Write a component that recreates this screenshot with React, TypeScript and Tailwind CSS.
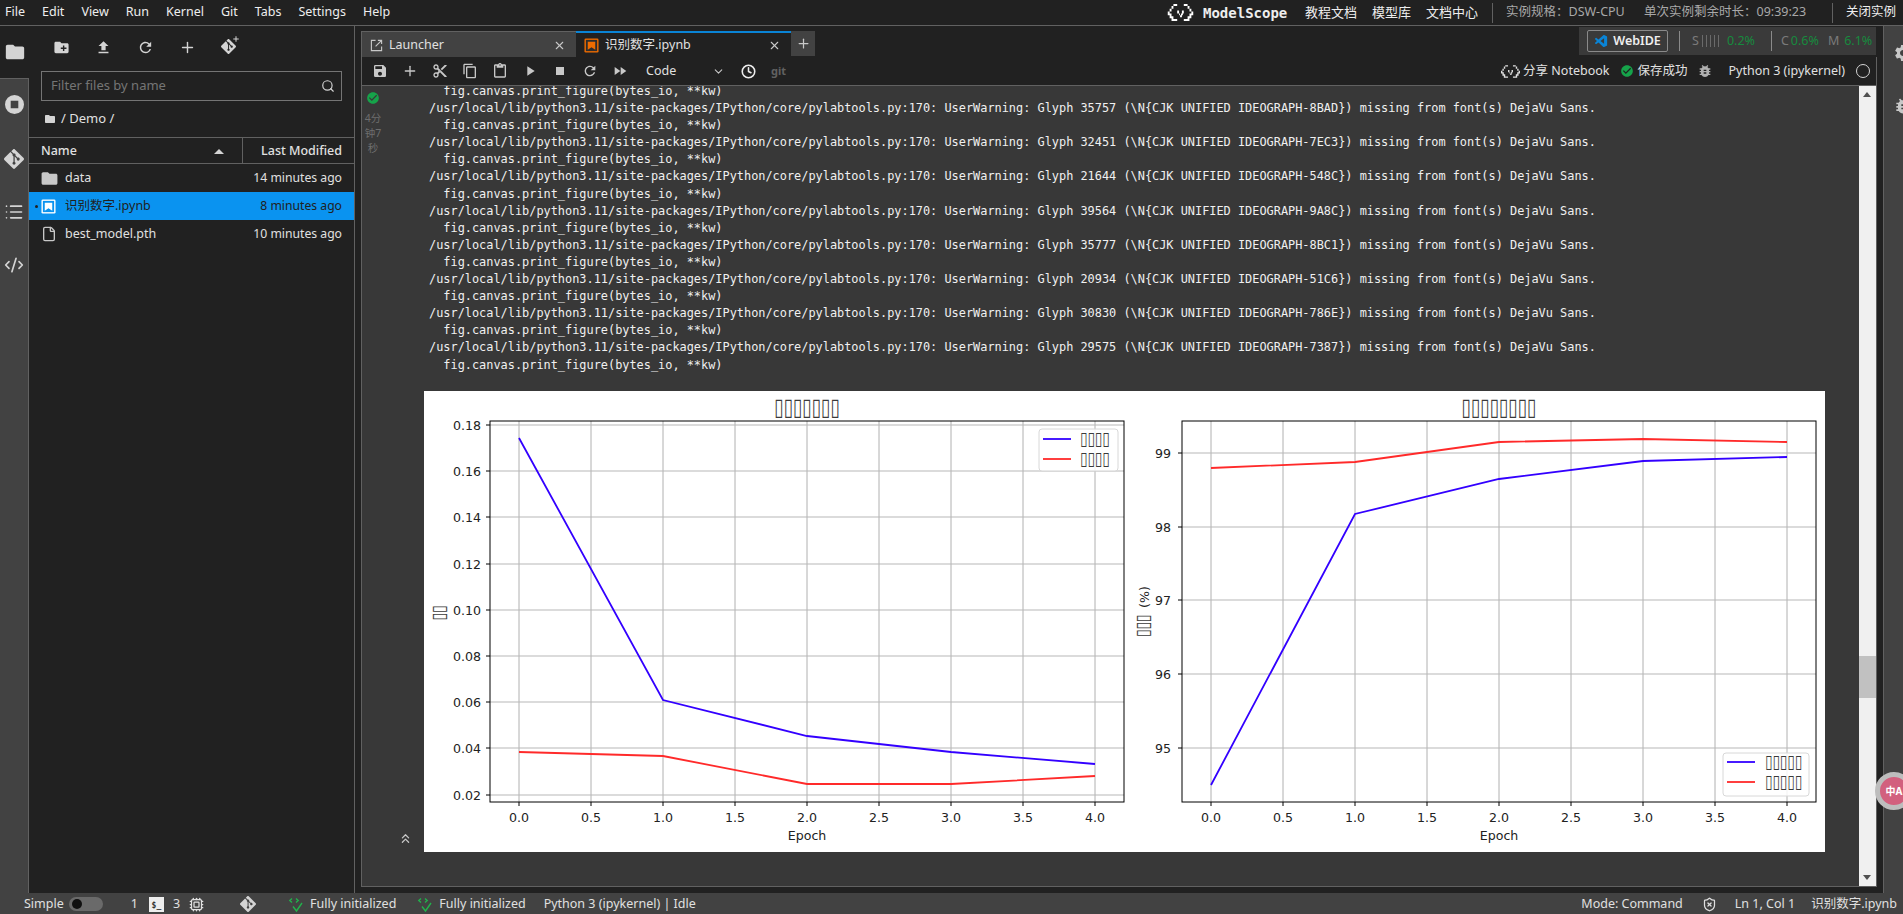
import React from 'react';
import { ChevronDown, ChevronsUp, Clock, CodeXml, Cpu, File, List, Plus, Search, ShieldX, X } from 'lucide-react';
import {
  MdBugReport,
  MdContentCut,
  MdCreateNewFolder,
  MdFastForward,
  MdFileUpload,
  MdFolder,
  MdOutlineContentCopy,
  MdOutlineContentPaste,
  MdPlayArrow,
  MdRefresh,
  MdSave,
  MdSettings,
  MdStop,
  MdCheckCircle,
} from 'react-icons/md';
import { SiGit } from 'react-icons/si';
import { VscVscode } from 'react-icons/vsc';

const MENU = ['File', 'Edit', 'View', 'Run', 'Kernel', 'Git', 'Tabs', 'Settings', 'Help'];

const GLYPHS = [
  ['35757', '8BAD'],
  ['32451', '7EC3'],
  ['21644', '548C'],
  ['39564', '9A8C'],
  ['35777', '8BC1'],
  ['20934', '51C6'],
  ['30830', '786E'],
  ['29575', '7387'],
];

const ModelScopeLogo = ({ className }: { className?: string }) => (
  <svg viewBox="0 0 27 18" className={className} fill="currentColor">
    <path d="M6 0h4v2H6v3H4v3H2v2h2v3h2v3h4v2H4v-3H2v-3H0V8h2V5h2V2h2z" />
    <path d="M21 0h-4v2h4v3h2v3h2v2h-2v3h-2v3h-4v2h6v-3h2v-3h2V8h-2V5h-2V2h-2z" />
    <path d="M10 7h2v3h1v2h1v-2h1V7h2v3h-1v2h-1v2h-2v-2h-1v-2h-2z" />
  </svg>
);

const NotebookIcon = ({ outer, inner, mark }: { outer: string; inner: string; mark: string }) => (
  <svg viewBox="0 0 16 16" className="h-[15px] w-[15px] shrink-0">
    <rect x="0.5" y="0.5" width="15" height="15" rx="1.5" fill={outer} />
    <rect x="2" y="2" width="12" height="12" fill={inner} />
    <path d="M4 4h8v8.5l-4-2.6-4 2.6z" fill={mark} />
  </svg>
);

const StatusCheck = () => (
  <svg viewBox="0 0 18 18" className="h-[18px] w-[18px]" fill="none" stroke="#22b14c" strokeWidth="1.4">
    <path d="M4 3.5 1.8 5.5 4 7.5M8 3.5l2.2 2L8 7.5M5 11.5l3.5 4.5L14 8" />
  </svg>
);

const GitCloneIcon = () => (
  <span className="relative block h-4 w-4">
    <SiGit className="h-[15px] w-[15px] text-[#d4d4d4]" />
    <Plus className="absolute -right-[3px] -top-[4px] h-2 w-2 text-[#d4d4d4]" strokeWidth={3} />
  </span>
);

type Point = [number, number];
type Series = { color: string; points: Point[] };

const TICK_X = ['0.0', '0.5', '1.0', '1.5', '2.0', '2.5', '3.0', '3.5', '4.0'];

// matplotlib's missing-glyph boxes are taller than the unicode one, so it gets stretched
const Tofu = ({ x, y, count, size = 11, anchor = 'start' }: { x: number; y: number; count: number; size?: number; anchor?: 'start' | 'middle' }) => (
  <text transform={`translate(${x} ${y}) scale(1 1.4)`} fontSize={size} textAnchor={anchor} fill="#3a3a3a" fontFamily="'DejaVu Sans', sans-serif">
    {'▯'.repeat(count)}
  </text>
);

type ChartProps = {
  left: number;
  firstX: number;
  yTicks: { label: string; y: number }[];
  labelRight: number;
  titleCount: number;
  series: Series[];
  legend: { x: number; y: number; w: number; h: number; lineX: number; textX: number; rows: number[]; count: number };
  yLabel: React.ReactNode;
};

const Chart = ({ left, firstX, yTicks, labelRight, titleCount, series, legend, yLabel }: ChartProps) => {
  const right = left + 634;
  const top = 421;
  const bottom = 802;
  const centre = left + 317;
  return (
    <g>
      <Tofu x={centre} y={415} count={titleCount} size={17} anchor="middle" />
      {TICK_X.map((label, i) => (
        <g key={label}>
          <line x1={firstX + i * 72} x2={firstX + i * 72} y1={top} y2={bottom} stroke="#b0b0b0" strokeWidth="1" />
          <line x1={firstX + i * 72} x2={firstX + i * 72} y1={bottom} y2={bottom + 4} stroke="#000" />
          <text x={firstX + i * 72} y={822} fontSize="12.6" textAnchor="middle" fill="#222">
            {label}
          </text>
        </g>
      ))}
      {yTicks.map((t) => (
        <g key={t.label}>
          <line x1={left} x2={right} y1={t.y} y2={t.y} stroke="#b8b8b8" strokeWidth="1.2" />
          <line x1={left - 4} x2={left} y1={t.y} y2={t.y} stroke="#000" />
          <text x={labelRight} y={t.y + 5} fontSize="12.6" textAnchor="end" fill="#222">
            {t.label}
          </text>
        </g>
      ))}
      {series.map((s) => (
        <polyline key={s.color} points={s.points.map((p) => p.join(',')).join(' ')} fill="none" stroke={s.color} strokeWidth="1.8" />
      ))}
      <rect x={left} y={top} width={634} height={bottom - top} fill="none" stroke="#000" strokeWidth="1" />
      <text x={centre} y={840} fontSize="12.6" textAnchor="middle" fill="#222">
        Epoch
      </text>
      <rect x={legend.x} y={legend.y} width={legend.w} height={legend.h} rx="3" fill="#fff" fillOpacity="0.85" stroke="#d8d8d8" />
      {legend.rows.map((rowY, i) => (
        <g key={rowY}>
          <line x1={legend.lineX} x2={legend.lineX + 28} y1={rowY} y2={rowY} stroke={i === 0 ? '#3300ff' : '#ff2a2a'} strokeWidth="1.8" />
          <Tofu x={legend.textX} y={rowY + 6} count={legend.count} size={13.5} />
        </g>
      ))}
      {yLabel}
    </g>
  );
};

const TrainingFigure = () => (
  <svg viewBox="425 391 1401 461" className="h-[461px] w-[1401px] shrink-0 bg-white" fontFamily="'DejaVu Sans', sans-serif">
    <Chart
      left={491}
      firstX={520}
      labelRight={482}
      titleCount={7}
      yTicks={[
        { label: '0.18', y: 425 },
        { label: '0.16', y: 471 },
        { label: '0.14', y: 517 },
        { label: '0.12', y: 564 },
        { label: '0.10', y: 610 },
        { label: '0.08', y: 656 },
        { label: '0.06', y: 702 },
        { label: '0.04', y: 748 },
        { label: '0.02', y: 795 },
      ]}
      series={[
        { color: '#3300ff', points: [[520, 438], [664, 700], [808, 736], [952, 752], [1096, 764]] },
        { color: '#ff2a2a', points: [[520, 752], [664, 756], [808, 784], [952, 784], [1096, 776]] },
      ]}
      legend={{ x: 1040, y: 429, w: 79, h: 42, lineX: 1044, textX: 1081, rows: [439, 459], count: 4 }}
      yLabel={
        <g transform="translate(446 613) rotate(-90)">
          <Tofu x={0} y={0} count={2} size={13.5} anchor="middle" />
        </g>
      }
    />
    <Chart
      left={1183}
      firstX={1212}
      labelRight={1172}
      titleCount={8}
      yTicks={[
        { label: '99', y: 453 },
        { label: '98', y: 527 },
        { label: '97', y: 600 },
        { label: '96', y: 674 },
        { label: '95', y: 748 },
      ]}
      series={[
        { color: '#3300ff', points: [[1212, 785], [1356, 514], [1500, 479], [1644, 461], [1788, 457]] },
        { color: '#ff2a2a', points: [[1212, 468], [1356, 462], [1500, 442], [1644, 439], [1788, 442]] },
      ]}
      legend={{ x: 1724, y: 753, w: 86, h: 43, lineX: 1728, textX: 1766, rows: [762, 782], count: 5 }}
      yLabel={
        <g transform="translate(1150 612) rotate(-90)">
          <Tofu x={-25} y={0} count={3} size={13.5} />
          <text x={4} y={0} fontSize="12.6" fill="#222">
            (%)
          </text>
        </g>
      }
    />
  </svg>
);

const TopBar = () => (
  <header className="flex h-[26px] shrink-0 items-center border-b border-[#616161] bg-[#212121] pl-[5px] text-[12.5px] text-[#eeeeee]">
    <nav className="flex w-[1162px] gap-[17px]">
      {MENU.map((item) => (
        <span key={item}>{item}</span>
      ))}
    </nav>
    <ModelScopeLogo className="h-[17px] w-[27px] text-white" />
    <span className="ml-[9px] w-[102px] font-['DejaVu_Sans_Mono',monospace] text-[14px] font-bold leading-none">ModelScope</span>
    <div className="flex w-[187px] gap-[15px] text-[13px]">
      <span>教程文档</span>
      <span>模型库</span>
      <span>文档中心</span>
    </div>
    <div className="flex h-[20px] items-center border-l border-[#616161] pl-[13px] text-[#a8a8a8]">
      <span className="w-[138px] whitespace-nowrap">{'实例规格\uFF1ADSW-CPU'}</span>
      <span className="w-[188px] whitespace-nowrap">{'单次实例剩余时长\uFF1A09:39:23'}</span>
    </div>
    <div className="flex h-[20px] items-center border-l border-[#616161] pl-[13px] whitespace-nowrap">关闭实例</div>
  </header>
);

const RailIcon = ({ children }: { children: React.ReactNode }) => <div className="flex h-[53px] items-center justify-center text-[#d4d4d4]">{children}</div>;

const ActivityRail = () => (
  <aside className="flex w-[29px] shrink-0 flex-col">
    <div className="flex h-[52px] items-center justify-center bg-[#212121] text-[#d4d4d4]">
      <MdFolder className="h-[22px] w-[22px]" />
    </div>
    <div className="flex flex-1 flex-col border-r border-t border-[#616161] bg-[#424242]">
      <RailIcon>
        <svg viewBox="0 0 20 20" className="-mt-[2px] h-[19px] w-[19px]" fill="currentColor">
          <path fillRule="evenodd" d="M10 0a10 10 0 1 1 0 20 10 10 0 0 1 0-20zM6 6v8h8V6z" />
        </svg>
      </RailIcon>
      <RailIcon>
        <SiGit className="h-5 w-5" />
      </RailIcon>
      <RailIcon>
        <List className="h-5 w-5" />
      </RailIcon>
      <RailIcon>
        <CodeXml className="h-5 w-5" />
      </RailIcon>
    </div>
  </aside>
);

const FileRow = ({ icon, name, time, selected }: { icon: React.ReactNode; name: string; time: string; selected?: boolean }) => (
  <div className={`relative flex h-[28px] items-center pl-[12px] pr-[12px] ${selected ? 'bg-[#0a93f0] text-[#212121]' : 'text-[#e0e0e0]'}`}>
    {selected && <span className="absolute left-[6px] top-[13px] h-[3px] w-[3px] rounded-full bg-[#212121]" />}
    <span className="flex w-[24px] justify-start">{icon}</span>
    <span className="flex-1">{name}</span>
    <span className="text-[12.2px]">{time}</span>
  </div>
);

const FilePanel = () => (
  <section className="flex w-[326px] shrink-0 flex-col border-r border-[#616161] bg-[#212121] text-[12.5px] text-[#e0e0e0]">
    <div className="flex h-[45px] items-center gap-[25px] pb-[3px] pl-[24px] text-[#d4d4d4]">
      <MdCreateNewFolder className="h-[17px] w-[17px]" />
      <MdFileUpload className="h-[17px] w-[17px]" />
      <MdRefresh className="h-[17px] w-[17px]" />
      <Plus className="h-[17px] w-[17px]" />
      <GitCloneIcon />
    </div>
    <div className="mx-[12px] flex h-[30px] items-center justify-between border border-[#757575] pl-[9px] pr-[6px] text-[13px] text-[#757575]">
      <span>Filter files by name</span>
      <Search className="h-[14px] w-[14px] text-[#d4d4d4]" />
    </div>
    <div className="flex h-[36px] items-center gap-[5px] pl-[15px] text-[13px]">
      <MdFolder className="h-[12px] w-[12px] text-[#d4d4d4]" />
      <span>/ Demo /</span>
    </div>
    <div className="flex h-[27px] border-b border-t border-[#616161] font-medium">
      <div className="flex w-[214px] items-center justify-between border-r border-[#616161] pl-[12px] pr-[18px] pt-[2px]">
        <span>Name</span>
        <span className="h-0 w-0 border-x-[5px] border-b-[5px] border-x-transparent border-b-[#d4d4d4]" />
      </div>
      <div className="flex flex-1 items-center justify-end pr-[12px] pt-[2px]">Last Modified</div>
    </div>
    <FileRow icon={<MdFolder className="h-[19px] w-[19px] -ml-[1px] text-[#c8c8c8]" />} name="data" time="14 minutes ago" />
    <FileRow selected icon={<NotebookIcon outer="#ffffff" inner="#0a93f0" mark="#ffffff" />} name="识别数字.ipynb" time="8 minutes ago" />
    <FileRow icon={<File className="h-[16px] w-[16px] text-[#c8c8c8]" />} name="best_model.pth" time="10 minutes ago" />
  </section>
);

const TabBar = () => (
  <div className="flex h-[31px] shrink-0 items-end justify-between">
    <div className="flex text-[12.5px] text-[#e0e0e0]">
      <div className="flex h-[26px] w-[215px] items-center gap-[6px] border-l border-t border-[#616161] bg-[#424242] pl-[8px] pr-[10px] pt-[1px]">
        <svg viewBox="0 0 14 14" className="h-[13px] w-[13px]" fill="none" stroke="#c8c8c8" strokeWidth="1.2">
          <path d="M6 1.5H1.5v11h11V8M8.5 1.5h4v4M12.5 1.5 6 8" />
        </svg>
        <span className="flex-1">Launcher</span>
        <X className="h-[13px] w-[13px] text-[#c8c8c8]" />
      </div>
      <div className="flex h-[26px] w-[215px] items-center gap-[6px] border-t-2 border-[#0a84d6] bg-[#212121] pl-[8px] pr-[10px]">
        <NotebookIcon outer="#ef6c00" inner="#2d2d2d" mark="#ef6c00" />
        <span className="flex-1">识别数字.ipynb</span>
        <X className="h-[13px] w-[13px] text-[#c8c8c8]" />
      </div>
      <div className="flex h-[25px] w-[24px] items-center justify-center bg-[#424242] text-[#c8c8c8]">
        <Plus className="h-[15px] w-[15px]" />
      </div>
    </div>
    <div className="mb-[2px] mr-[1px] flex h-[28px] w-[297px] items-center bg-[#3a3a3a] pl-[8px] text-[12.5px]">
      <div className="flex h-[22px] w-[81px] items-center justify-center gap-[4px] rounded-[2px] border border-[#8a8a8a] font-semibold text-[#eeeeee]">
        <VscVscode className="h-[15px] w-[15px] text-[#0a84d6]" />
        WebIDE
      </div>
      <span className="ml-[11px] h-[20px] border-l border-[#8a8a8a]" />
      <span className="ml-[12px] text-[#7a7a7a]">S</span>
      <span className="ml-[3px] flex gap-[3px]">
        {[0, 1, 2, 3, 4].map((i) => (
          <span key={i} className="h-[12px] w-[1px] bg-[#6a6a6a]" />
        ))}
      </span>
      <span className="ml-[8px] text-[#178a3e]">0.2%</span>
      <span className="ml-[16px] h-[20px] border-l border-[#8a8a8a]" />
      <span className="ml-[9px] text-[#7a7a7a]">C</span>
      <span className="ml-[2px] text-[#178a3e]">0.6%</span>
      <span className="ml-[9px] text-[#7a7a7a]">M</span>
      <span className="ml-[5px] text-[#178a3e]">6.1%</span>
    </div>
  </div>
);

const NotebookToolbar = () => (
  <div className="flex h-[29px] shrink-0 items-center border-b border-[#616161] bg-[#212121] pl-[10px] pr-[6px] text-[12.5px] text-[#e0e0e0]">
    <div className="flex items-center gap-[14px] text-[#c8c8c8]">
      <MdSave className="h-4 w-4" />
      <Plus className="h-4 w-4" />
      <MdContentCut className="h-4 w-4" />
      <MdOutlineContentCopy className="h-4 w-4" />
      <MdOutlineContentPaste className="h-4 w-4" />
      <MdPlayArrow className="h-4 w-4" />
      <MdStop className="h-4 w-4" />
      <MdRefresh className="h-4 w-4" />
      <MdFastForward className="h-4 w-4" />
    </div>
    <span className="ml-[18px] w-[66px]">Code</span>
    <ChevronDown className="h-[13px] w-[13px] text-[#c8c8c8]" />
    <Clock className="ml-[16px] h-[15px] w-[15px] text-[#eeeeee]" strokeWidth={2.5} />
    <span className="ml-[15px] text-[11px] font-bold text-[#616161]">git</span>
    <div className="ml-auto flex items-center">
      <ModelScopeLogo className="h-[13px] w-[19px] text-[#e0e0e0]" />
      <span className="ml-[3px]">分享 Notebook</span>
      <MdCheckCircle className="ml-[11px] h-[14px] w-[14px] text-[#16a34a]" />
      <span className="ml-[3px]">保存成功</span>
      <MdBugReport className="ml-[10px] h-[16px] w-[16px] text-[#b0b0b0]" />
      <span className="ml-[15px]">Python 3 (ipykernel)</span>
      <span className="ml-[11px] h-[14px] w-[14px] rounded-full border border-[#d4d4d4]" />
    </div>
  </div>
);

const OutputLines = () => (
  <pre className="-mt-[3px] ml-[45px] font-['DejaVu_Sans_Mono',monospace] text-[11.9px] leading-[17.1px] text-[#f0f0f0]">
    {'  fig.canvas.print_figure(bytes_io, **kw)\n'}
    {GLYPHS.map(
      ([code, hex]) =>
        `/usr/local/lib/python3.11/site-packages/IPython/core/pylabtools.py:170: UserWarning: Glyph ${code} (\\N{CJK UNIFIED IDEOGRAPH-${hex}}) missing from font(s) DejaVu Sans.\n  fig.canvas.print_figure(bytes_io, **kw)\n`,
    ).join('')}
  </pre>
);

const NotebookArea = () => (
  <div className="flex min-h-0 flex-1 overflow-hidden bg-[#383838]">
    <div className="flex w-[22px] shrink-0 flex-col items-center pt-[5px]">
      <MdCheckCircle className="h-[14px] w-[14px] text-[#16a34a]" />
      <span className="mt-[6px] w-[20px] text-center text-[10.5px] leading-[15px] text-[#6e6e6e]">4分钟7秒</span>
    </div>
    <div className="flex min-w-0 flex-1 flex-col">
      <OutputLines />
      <div className="mt-[17px] flex items-end">
        <div className="flex w-[40px] justify-center pb-[6px] pl-[3px] text-[#c8c8c8]">
          <ChevronsUp className="h-[15px] w-[15px]" />
        </div>
        <TrainingFigure />
      </div>
    </div>
    <div className="relative w-[17px] shrink-0 bg-[#f0f0f0]">
      <span className="absolute left-[4px] top-[6px] h-0 w-0 border-x-[4px] border-b-[5px] border-x-transparent border-b-[#505050]" />
      <span className="absolute top-[570px] h-[42px] w-full bg-[#c1c1c1]" />
      <span className="absolute bottom-[6px] left-[4px] h-0 w-0 border-x-[4px] border-t-[5px] border-x-transparent border-t-[#505050]" />
    </div>
  </div>
);

const RightRail = () => (
  <aside className="ml-[6px] flex w-[20px] shrink-0 flex-col overflow-hidden border-l border-[#616161] bg-[#424242] pl-[9px] text-[#c8c8c8]">
    <div className="mt-[17px] flex w-[22px] flex-col gap-[33px]">
      <MdSettings className="h-[20px] w-[20px] shrink-0" />
      <MdBugReport className="h-[20px] w-[20px] shrink-0" />
    </div>
  </aside>
);

const StatusBar = () => (
  <footer className="flex h-[21px] shrink-0 items-center bg-[#424242] pl-[24px] pr-[6px] pt-[1px] text-[12.5px] text-[#e0e0e0]">
    <span>Simple</span>
    <span className="ml-[5px] flex h-[14px] w-[34px] items-center rounded-full bg-[#6a6a6a] pl-[3px]">
      <span className="h-[10px] w-[10px] rounded-full bg-[#111111]" />
    </span>
    <span className="ml-[28px]">1</span>
    <span className="ml-[11px] flex h-[15px] w-[15px] items-end justify-center bg-[#eeeeee] font-['DejaVu_Sans_Mono',monospace] text-[8px] font-bold text-[#333333]">$_</span>
    <span className="ml-[9px]">3</span>
    <Cpu className="ml-[9px] h-[15px] w-[15px]" />
    <SiGit className="ml-[36px] h-[16px] w-[16px] text-[#d4d4d4]" />
    <span className="ml-[32px]">
      <StatusCheck />
    </span>
    <span className="ml-[4px]">Fully initialized</span>
    <span className="ml-[21px]">
      <StatusCheck />
    </span>
    <span className="ml-[4px]">Fully initialized</span>
    <span className="ml-[18px]">Python 3 (ipykernel) | Idle</span>
    <span className="ml-auto">Mode: Command</span>
    <ShieldX className="ml-[19px] h-[15px] w-[15px]" />
    <span className="ml-[18px]">Ln 1, Col 1</span>
    <span className="ml-[16px]">识别数字.ipynb</span>
  </footer>
);

export default function App() {
  return (
    <div className="relative flex h-[914px] w-[1903px] flex-col overflow-hidden bg-[#212121] font-['Noto_Sans','Noto_Sans_CJK_SC',sans-serif]">
      <TopBar />
      <div className="flex min-h-0 flex-1">
        <ActivityRail />
        <FilePanel />
        <main className="ml-[6px] flex w-[1516px] shrink-0 flex-col">
          <TabBar />
          <div className="flex min-h-0 flex-1 flex-col border-x border-b border-[#616161]">
            <NotebookToolbar />
            <NotebookArea />
          </div>
          <div className="h-[6px] shrink-0" />
        </main>
        <RightRail />
      </div>
      <StatusBar />
      <div className="absolute left-[1875px] top-[772px] flex h-[38px] w-[38px] items-center justify-center rounded-full border-[5px] border-[#bdbdbd] bg-[#d2607e] text-[10px] font-bold leading-none text-white">
        中A
      </div>
    </div>
  );
}
